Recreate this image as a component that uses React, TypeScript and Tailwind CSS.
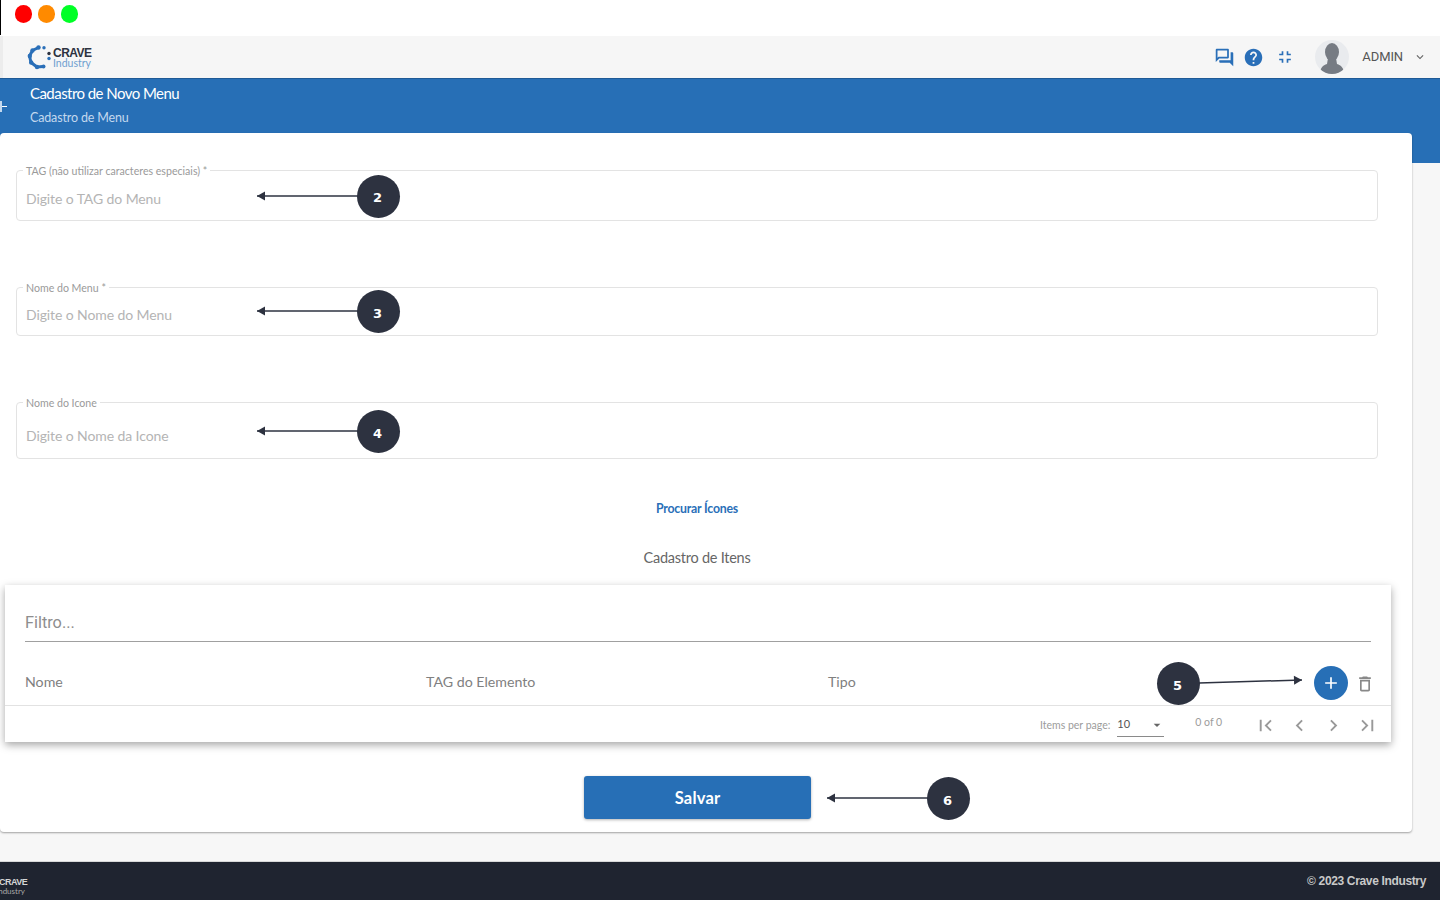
import React from 'react'
import {
    MdOutlineQuestionAnswer,
    MdHelp,
    MdFullscreenExit,
    MdKeyboardArrowDown,
    MdAdd,
    MdOutlineDelete,
    MdArrowDropDown,
    MdFirstPage,
    MdLastPage,
    MdChevronLeft,
    MdChevronRight,
} from 'react-icons/md'

const CraveMark = () => (
    <svg width="26" height="26" viewBox="0 0 26 26" fill="none">
        <path d="M11.5 3.5 L5.5 6.5 L2.5 12 L4 18.5 L10 23 L16 22.5" stroke="#2a6fb8" strokeWidth="3" strokeLinecap="round" strokeLinejoin="round" />
        <circle cx="11.5" cy="3.5" r="2.2" fill="#2a6fb8" />
        <circle cx="5.5" cy="6.5" r="2.2" fill="#2a6fb8" />
        <circle cx="2.8" cy="12" r="2.2" fill="#2a6fb8" />
        <circle cx="4.2" cy="18.5" r="2.2" fill="#2a6fb8" />
        <circle cx="10" cy="23" r="2.2" fill="#2a6fb8" />
        <circle cx="16.5" cy="22.5" r="2" fill="#2a6fb8" />
        <circle cx="17" cy="3.8" r="1.7" fill="#2a6fb8" />
        <circle cx="22" cy="9.5" r="1.7" fill="#2d3240" />
        <circle cx="22" cy="14.5" r="1.7" fill="#2a6fb8" />
    </svg>
)

const Avatar = () => (
    <div className="w-[34px] h-[34px] rounded-full bg-[#e9ebee] overflow-hidden shrink-0">
        <svg width="34" height="34" viewBox="0 0 34 34">
            <ellipse cx="17" cy="12" rx="7" ry="9" fill="#767b83" />
            <path d="M13 18 L21 18 L22 24 C26 25 29 28 29 34 L5 34 C5 28 8 25 12 24 Z" fill="#767b83" />
        </svg>
    </div>
)

const FormField = ({ label, placeholder, heightClass, paddingClass }: { label: string, placeholder: string, heightClass: string, paddingClass: string }) => (
    <fieldset className={`${heightClass} border border-[#e3e3e3] rounded-[4px] pl-[6px] pr-2 min-w-0`}>
        <legend className="px-[3px] text-[10.6px] leading-[12px] text-[#9a9a9a] ml-0 relative top-[1px]">{label}</legend>
        <div className={`${paddingClass} text-[14px] leading-[20px] text-[#b4b4b4] pl-[3px] tracking-[-0.1px]`}>{placeholder}</div>
    </fieldset>
)

const Callout = ({ n, x, y, x1, y1, x2, y2 }: { n: number, x: number, y: number, x1: number, y1: number, x2: number, y2: number }) => {
    const angle = Math.atan2(y2 - y1, x2 - x1) * 180 / Math.PI
    return (
        <>
            <svg className="absolute left-0 top-0 pointer-events-none" width="1440" height="900">
                <line x1={x1} y1={y1} x2={x2} y2={y2} stroke="#2d3240" strokeWidth="1.5" />
                <polygon points="0,0 -8,-4.5 -8,4.5" fill="#2d3240" transform={`translate(${x2} ${y2}) rotate(${angle})`} />
            </svg>
            <div
                className="absolute w-[43px] h-[43px] rounded-full bg-[#2d3240] text-white flex items-center justify-center text-[13px] font-black font-['DejaVu_Sans',sans-serif] pt-[4px] pr-[2px]"
                style={{ left: x - 21.5, top: y - 21.5 }}
            >
                {n}
            </div>
        </>
    )
}

export default function App() {
    return (
        <div className="relative w-[1440px] h-[900px] overflow-hidden bg-[#f7f7f7] font-['Lato',sans-serif] flex flex-col">
            {/* window chrome */}
            <div className="h-[36px] bg-white flex items-start shrink-0 relative">
                <div className="w-[1px] h-[35px] bg-black" />
                <div className="flex gap-[6px] ml-[14px] mt-[5px]">
                    <span className="w-[17px] h-[18px] rounded-full bg-[#ff0000]" />
                    <span className="w-[17px] h-[18px] rounded-full bg-[#ff8a00]" />
                    <span className="w-[17px] h-[18px] rounded-full bg-[#00ff26]" />
                </div>
            </div>

            {/* top bar */}
            <div className="h-[42px] bg-[#f6f6f6] border-l-[3px] border-[#ececec] flex items-center shrink-0 pl-[24px] pr-[13px]">
                <div className="flex items-center -mt-[1px]">
                    <CraveMark />
                    <div className="flex flex-col mt-[3px]">
                        <span className="text-[12px] leading-[10px] font-bold text-[#2d3240] font-['Liberation_Sans',sans-serif] tracking-[-0.5px]">CRAVE</span>
                        <span className="text-[10.5px] leading-[10px] text-[#6f9fd0]">Industry</span>
                    </div>
                </div>
                <div className="ml-auto flex items-center text-[#2a6fb8]">
                    <MdOutlineQuestionAnswer size={21} />
                    <MdHelp size={21} className="ml-[8px]" />
                    <MdFullscreenExit size={20} className="ml-[11px]" />
                    <div className="ml-[20px] mr-[13px]"><Avatar /></div>
                    <span className="text-[13px] text-[#555] font-['Roboto',sans-serif] tracking-[-0.1px]">ADMIN</span>
                    <MdKeyboardArrowDown size={14} className="ml-[10px] text-[#666]" />
                </div>
            </div>

            {/* blue band */}
            <div className="h-[85px] bg-[#276fb6] shrink-0 relative pl-[30px] border-t border-[#1f5a96]">
                <div className="text-[15px] leading-[20px] text-white mt-[4px] tracking-[-0.55px]">Cadastro de Novo Menu</div>
                <div className="text-[12.5px] leading-[16px] text-[#c3d8ee] mt-[7px] tracking-[-0.15px]">Cadastro de Menu</div>
                <div className="absolute left-0 top-[27px] w-[7px] h-[1px] bg-white" />
                <div className="absolute left-0 top-[22px] w-[2px] h-[11px] bg-[#c3d8ee]" />
            </div>

            {/* card */}
            <div className="relative -mt-[30px] w-[1412px] h-[699px] shrink-0 bg-white rounded-[4px] shadow-[0_1px_2px_rgba(0,0,0,0.35)] flex flex-col">
                <div className="pl-[16px] pr-[34px] pt-[31px] flex flex-col">
                    <FormField label="TAG (não utilizar caracteres especiais) *" placeholder="Digite o TAG do Menu" heightClass="h-[57px]" paddingClass="pt-[13px]" />
                    <div className="h-[60px]" />
                    <FormField label="Nome do Menu *" placeholder="Digite o Nome do Menu" heightClass="h-[55px]" paddingClass="pt-[12px]" />
                    <div className="h-[60px]" />
                    <FormField label="Nome do Icone" placeholder="Digite o Nome da Icone" heightClass="h-[63px]" paddingClass="pt-[18px]" />
                </div>

                <div className="w-[1394px] text-center text-[12.3px] font-bold text-[#2a6fb8] mt-[42px] leading-[16px] tracking-[-0.2px]">Procurar Ícones</div>
                <div className="w-[1394px] text-center text-[14.5px] text-[#666] mt-[31px] leading-[20px] tracking-[-0.25px]">Cadastro de Itens</div>

                {/* items table */}
                <div className="ml-[5px] mt-[17px] w-[1386px] h-[157px] bg-white shadow-[0_3px_8px_rgba(0,0,0,0.35)] flex flex-col">
                    <div className="mx-[20px] h-[57px] border-b border-[#a0a0a0] flex items-end pb-[8px] text-[16.3px] leading-[20px] text-[#8e8e8e] font-['Roboto',sans-serif]">Filtro...</div>
                    <div className="h-[64px] border-b border-[#e2e2e2] flex items-center pl-[20px] text-[14.2px] text-[#808080] relative">
                        <span className="w-[401px] pt-[16px]">Nome</span>
                        <span className="w-[402px] pt-[16px]">TAG do Elemento</span>
                        <span className="pt-[16px]">Tipo</span>
                        <div className="ml-auto flex items-center mr-[16px] pt-[19px]">
                            <div className="w-[34px] h-[34px] rounded-full bg-[#276fb6] flex items-center justify-center text-white">
                                <MdAdd size={20} />
                            </div>
                            <MdOutlineDelete size={20} className="ml-[7px] mt-[2px] text-[#888]" />
                        </div>
                    </div>
                    <div className="flex-1 flex items-start pl-[1035px] text-[10.5px] text-[#9c9c9c]">
                        <span className="mt-[13px] leading-[12px]">Items per page:</span>
                        <div className="ml-[7px] mt-[7px] w-[47px] h-[24px] border-b border-[#8a8a8a] flex items-center justify-between text-[#555] text-[11px]">
                            <span>10</span>
                            <MdArrowDropDown size={16} className="text-[#666] mr-[-1px]" />
                        </div>
                        <span className="ml-[31px] mt-[10px] leading-[12px]">0 of 0</span>
                        <div className="ml-[32px] mt-[8px] flex items-center gap-[11px] text-[#999]">
                            <MdFirstPage size={23} />
                            <MdChevronLeft size={23} />
                            <MdChevronRight size={23} />
                            <MdLastPage size={23} />
                        </div>
                    </div>
                </div>

                <button className="ml-[584px] mt-[34px] w-[227px] h-[43px] rounded-[3px] bg-[#276fb6] text-white text-[16.5px] font-bold tracking-[0.2px] pt-[2px] shadow-[0_1px_3px_rgba(0,0,0,0.3)]">Salvar</button>
            </div>

            {/* footer */}
            <div className="mt-[29px] flex-1 bg-[#1f2430] border-t border-[#d8d8d8] flex items-center justify-between pr-[14px] overflow-hidden">
                <div className="flex flex-col -ml-[1px] mt-[10px]">
                    <span className="text-[9px] leading-[9px] font-bold text-[#d5d5d5] font-['Liberation_Sans',sans-serif] tracking-[-0.5px]">CRAVE</span>
                    <span className="text-[8px] leading-[8px] text-[#a8a8a8] -ml-[3px]">Industry</span>
                </div>
                <span className="text-[12px] font-bold text-[#c9c9c9] font-['Liberation_Sans',sans-serif] tracking-[-0.35px]">© 2023 Crave Industry</span>
            </div>

            {/* annotation callouts */}
            <Callout n={2} x={378.5} y={196} x1={358} y1={196} x2={257} y2={196} />
            <Callout n={3} x={378.5} y={311.5} x1={358} y1={311} x2={257} y2={311} />
            <Callout n={4} x={378.5} y={431.5} x1={358} y1={431} x2={257} y2={431} />
            <Callout n={5} x={1178.5} y={683.5} x1={1199} y1={683} x2={1302} y2={680} />
            <Callout n={6} x={948.5} y={798.5} x1={928} y1={798} x2={827} y2={798} />
        </div>
    )
}
